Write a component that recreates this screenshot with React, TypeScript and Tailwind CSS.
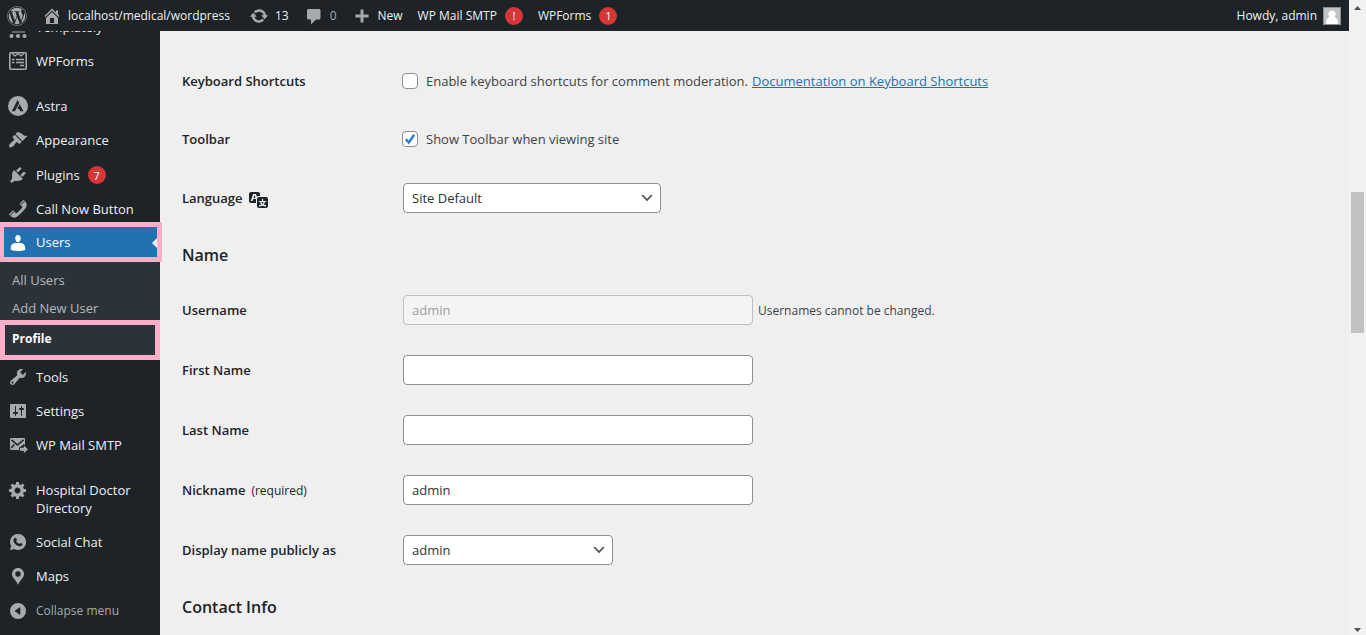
import type { ReactNode } from "react";
import { FaWordpress } from "react-icons/fa";

const icons = {
  home: "M16 8.5l1.53 1.53-1.06 1.06L10 4.6l-6.47 6.49-1.06-1.06L10 2.5l4 4v-2h2v4zm-6-2.46l6 5.99V18H4v-5.97zM12 17v-5H8v5h4z",
  update:
    "M10.2 3.28c3.53 0 6.43 2.61 6.92 6h2.08l-3.5 4-3.5-4h2.32c-.45-1.97-2.21-3.45-4.32-3.45-1.45 0-2.73.71-3.54 1.78L4.95 5.66C6.23 4.2 8.11 3.28 10.2 3.28zm-.4 13.44c-3.52 0-6.43-2.61-6.92-6H.8l3.5-4c1.17 1.33 2.33 2.67 3.5 4H5.48c.45 1.97 2.21 3.45 4.32 3.45 1.45 0 2.73-.71 3.54-1.78l1.71 1.95c-1.28 1.46-3.15 2.38-5.25 2.38z",
  comment:
    "M4.5 3h10.5c.8 0 1.500.7 1.500 1.500v7.500c0 .8-.7 1.500-1.500 1.500h-3l-5 5v-5H4.500C3.700 13.500 3 12.800 3 12V4.500C3 3.700 3.700 3 4.500 3z",
  plus: "M16.500 8.500v3H11.500v5h-3v-5h-5v-3h5v-5h3v5z",
  appearance:
    "M14.48 11.06L7.41 3.99l1.5-1.5c.5-.56 2.3-.47 3.51.32 1.21.8 1.43 1.28 2.91 2.1 1.18.64 2.45 1.26 4.45.85zm-.71.71L6.7 4.7 4.93 6.47c-.39.39-.39 1.02 0 1.41l1.06 1.06c.39.39.39 1.03 0 1.42-.6.6-1.43 1.11-2.21 1.69-.35.26-.7.53-1.01.84C1.43 14.23.4 16.08 1.4 17.07c.99 1 2.84-.03 4.18-1.36.31-.31.58-.66.85-1.02.57-.78 1.08-1.61 1.69-2.21.39-.39 1.02-.39 1.41 0l1.06 1.06c.39.39 1.02.39 1.41 0z",
  plugins:
    "M13.11 4.36L9.87 7.6 8 5.73l3.24-3.24c.35-.34 1.05-.2 1.56.32.52.51.66 1.21.31 1.55zm-8 1.77l.91-1.12 9.01 9.01-1.19.84c-.71.71-2.63 1.16-3.82 1.16H6.14L4.9 17.26c-.59.59-1.54.59-2.12 0-.59-.58-.59-1.53 0-2.12l1.24-1.24v-3.88c0-1.13.4-3.19 1.09-3.89zm7.26 3.97l3.24-3.24c.34-.35 1.04-.21 1.55.31.52.51.66 1.21.31 1.55l-3.24 3.25z",
  phone:
    "M12.06 6l-.21-.2c-.52-.54-.43-.79.08-1.3l2.72-2.75c.81-.82.96-1.21 1.73-.48l.21.2zm.53.45l4.4-4.4c.7.94 2.34 3.47 1.53 5.34-.73 1.67-1.09 1.75-2 3-1.85 2.11-4.18 4.37-6 6.07-1.26.91-1.31 1.33-3 2-1.8.71-4.4-.89-5.38-1.56l4.4-4.4 1.18 1.62c.34.46 1.2-.06 1.8-.66 1.04-1.05 3.18-3.18 4-4.07.59-.59 1.12-1.45.66-1.8zM1.57 16.5l-.21-.21c-.68-.74-.29-.9.52-1.7l2.74-2.72c.51-.49.75-.6 1.27-.11l.2.21z",
  users:
    "M10 9.250c-2.270 0-2.730-3.440-2.730-3.440C7 4.020 7.820 2 9.970 2c2.160 0 2.980 2.020 2.710 3.810 0 0-.41 3.440-2.680 3.440zM7.230 10h5.490c2.390 0 4.520 2.330 4.520 4.530v2.490s-3.650 1.130-7.240 1.130c-3.650 0-7.240-1.130-7.240-1.130v-2.490c0-2.250 1.940-4.530 4.470-4.530z",
  tools:
    "M16.68 9.77c-1.34 1.34-3.3 1.67-4.95.99l-5.41 6.52c-.99.99-2.59.99-3.58 0s-.99-2.59 0-3.57l6.52-5.42c-.68-1.65-.35-3.61.99-4.95 1.28-1.28 3.12-1.62 4.72-1.06l-2.89 2.89 2.82 2.82 2.86-2.87c.53 1.58.18 3.39-1.08 4.65zM3.81 16.21c.4.39 1.04.39 1.43 0 .4-.4.4-1.04 0-1.43-.39-.4-1.03-.4-1.43 0-.39.39-.39 1.03 0 1.43z",
  settings:
    "M18 16V4c0-.55-.45-1-1-1H3c-.55 0-1 .45-1 1v12c0 .55.45 1 1 1h14c.55 0 1-.45 1-1zM8 11h1c.55 0 1 .45 1 1s-.45 1-1 1H8v1.5c0 .28-.22.5-.5.5s-.5-.22-.5-.5V13H6c-.55 0-1-.45-1-1s.45-1 1-1h1V5.5c0-.28.22-.5.5-.5s.5.22.5.5V11zm5-2h-1c-.55 0-1-.45-1-1s.45-1 1-1h1V5.5c0-.28.22-.5.5-.5s.5.22.5.5V7h1c.55 0 1 .45 1 1s-.45 1-1 1h-1v5.5c0 .28-.22.5-.5.5s-.5-.22-.5-.5V9z",
  generic:
    "M18 12h-2.18c-.17.7-.44 1.35-.81 1.93l1.54 1.54-2.1 2.1-1.54-1.54c-.58.36-1.23.63-1.91.79V19H8v-2.18c-.68-.16-1.33-.43-1.91-.79l-1.54 1.54-2.12-2.12 1.54-1.54c-.36-.58-.63-1.23-.79-1.91H1V9.03h2.17c.16-.7.44-1.35.8-1.94L2.43 5.55l2.1-2.1 1.54 1.54c.58-.37 1.24-.64 1.93-.81V2h3v2.18c.68.16 1.33.43 1.91.79l1.54-1.54 2.12 2.12-1.54 1.54c.36.59.64 1.24.8 1.94H18V12zm-8.5 1.5c1.66 0 3-1.34 3-3s-1.34-3-3-3-3 1.34-3 3 1.34 3 3 3z",
  location:
    "M10 2C6.690 2 4 4.690 4 8c0 2.020 1.170 3.710 2.200 5.100 1.300 1.800 3 3.700 3.800 5.900.8-2.200 2.500-4.100 3.800-5.900C14.830 11.710 16 10.020 16 8c0-3.310-2.690-6-6-6zm0 3.300a2.700 2.700 0 1 1 0 5.400 2.700 2.700 0 0 1 0-5.400z",
  collapse: "M10 2a8 8 0 1 0 0 16 8 8 0 0 0 0-16zM12.300 6v8L6.500 10z",
  translation:
    "M11 7H9.49c-.63 0-1.25.3-1.59.7L7 5H4.13l-2.39 7h1.69l.74-2H7v4H2c-1.1 0-2-.9-2-2V5c0-1.1.9-2 2-2h7c1.1 0 2 .9 2 2v2zM6.51 9H4.49l1-2.93zM10 8h7c1.1 0 2 .9 2 2v7c0 1.1-.9 2-2 2h-7c-1.1 0-2-.9-2-2v-7c0-1.1.9-2 2-2zm7.25 5v-1.08h-3.17V9.75h-1.16v2.17H9.75V13h1.28c.11.85.56 1.85 1.28 2.62-.87.36-1.89.62-2.31.62-.01.02.22.97.2 1.46.84 0 2.21-.5 3.28-1.15 1.09.65 2.48 1.15 3.34 1.15-.02-.49.2-1.44.2-1.46-.43 0-1.49-.27-2.38-.63.7-.77 1.14-1.77 1.25-2.61h1.36zm-3.81 1.93c-.5-.46-.85-1.13-1.01-1.93h2.09c-.17.8-.51 1.47-1 1.93l-.04.03s-.03-.02-.04-.03z",
};

function Icon({ name }: { name: keyof typeof icons }) {
  return (
    <svg viewBox="0 0 20 20" className="size-5 shrink-0" fill="currentColor" fillRule="evenodd" aria-hidden="true">
      <path d={icons[name]} />
    </svg>
  );
}

function TemplatelyIcon() {
  return (
    <svg viewBox="0 0 20 20" className="size-5 shrink-0" fill="currentColor" aria-hidden="true">
      <path d="M3 2h14v3H3zM4 13.600h13v1H4z" />
      <circle cx="3.500" cy="18" r="2" />
      <circle cx="10" cy="18" r="2" />
      <circle cx="16.500" cy="18" r="2" />
    </svg>
  );
}

function WPFormsIcon() {
  return (
    <svg viewBox="0 0 20 20" className="size-5 shrink-0" fill="none" stroke="currentColor" aria-hidden="true">
      <rect x="1.800" y="1.800" width="16.400" height="16.400" rx="1" strokeWidth="1.600" />
      <path d="M4 2.500l3 2.500 3-2.500 3 2.500 3-2.500" strokeWidth="1.300" />
      <path d="M4 8.500h2.500M8 8.500h8M4 11.500h2.500M8 11.500h8M12 14.500h4" strokeWidth="1.500" />
    </svg>
  );
}

function AstraIcon() {
  return (
    <svg viewBox="0 0 20 20" className="size-5 shrink-0" aria-hidden="true">
      <circle cx="10" cy="10" r="10" fill="currentColor" />
      <path d="M9.600 3.800L3.900 15.200h3L11.200 7z" fill="#1d2327" />
      <path d="M11.700 8l-2.400 4.900h2l1 2.300h3.100z" fill="#1d2327" />
    </svg>
  );
}

function MailIcon() {
  return (
    <svg viewBox="0 0 20 20" className="size-5 shrink-0" aria-hidden="true">
      <path d="M3 3h13a1 1 0 0 1 1 1v5.500l-4 1.500v4H3a1 1 0 0 1-1-1V4a1 1 0 0 1 1-1z" fill="currentColor" />
      <path d="M3.500 4.800l6 5.200 6-5.200M3.300 13l3-3.500" fill="none" stroke="#1d2327" strokeWidth="1.600" />
      <path d="M11.500 12.200h4V9.500l5 4.800-5 4.700v-2.700h-4z" fill="currentColor" stroke="#1d2327" strokeWidth="1" />
    </svg>
  );
}

function ChatIcon() {
  return (
    <svg viewBox="0 0 20 20" className="size-5 shrink-0" aria-hidden="true">
      <path d="M10 2a8 8 0 1 1-3.800 15L2 18.200l1.200-4.100A8 8 0 0 1 10 2z" fill="currentColor" />
      <path
        d="M7.300 5.700c.4-.1.800 0 1 .5l.6 1.400c.2.500-.5 1.100-.8 1.500.8 1.500 1.800 2.300 3.200 2.900.4-.4.800-1.200 1.300-1l1.600.8c.500.3.1 1.400-.3 1.800-.7.700-1.700.9-2.700.6-2.900-.8-5.200-3-5.800-5.300-.3-1.300.6-2.900 1.900-3.200z"
        fill="#1d2327"
      />
    </svg>
  );
}

function Badge({ children }: { children: ReactNode }) {
  return (
    <span className="flex size-[18px] shrink-0 items-center justify-center rounded-full bg-[#d63638] text-[11px] leading-none text-white">
      {children}
    </span>
  );
}

function MenuItem({ icon, label, badge }: { icon: ReactNode; label: string; badge?: string }) {
  return (
    <li>
      <a
        href="#"
        className={
          badge
            ? "flex min-h-[35px] gap-2 px-2 pt-[9px] pb-2 leading-[18px] text-[#f0f0f1]"
            : "flex min-h-[34px] gap-2 px-2 py-2 leading-[18px] text-[#f0f0f1]"
        }
      >
        <span className="flex h-[18px] items-center text-[#a7aaad]">{icon}</span>
        <span>{label}</span>
        {badge && <Badge>{badge}</Badge>}
      </a>
    </li>
  );
}

function Sidebar() {
  return (
    <nav aria-label="Main menu" className="w-40 shrink-0 bg-[#1d2327] text-[13px]">
      <ul>
        <li className="flex h-[13px] flex-col justify-end overflow-hidden">
          <a href="#" className="flex h-[34px] shrink-0 gap-2 px-2 py-2 leading-[18px] text-[#f0f0f1]">
            <span className="text-[#a7aaad]"><TemplatelyIcon /></span>
            Templately
          </a>
        </li>
        <MenuItem icon={<WPFormsIcon />} label="WPForms" />
      </ul>
      <ul className="mt-[11px]">
        <MenuItem icon={<AstraIcon />} label="Astra" />
        <MenuItem icon={<Icon name="appearance" />} label="Appearance" />
        <MenuItem icon={<Icon name="plugins" />} label="Plugins" badge="7" />
        <MenuItem icon={<Icon name="phone" />} label="Call Now Button" />
        <li>
          <div className="relative">
            <a href="#" className="flex h-[34px] items-center gap-2 bg-[#2271b1] px-2 text-white">
              <Icon name="users" />
              Users
            </a>
            <span className="absolute top-[9px] right-0 border-y-8 border-r-8 border-y-transparent border-r-[#efefef]" />
            <span className="pointer-events-none absolute -top-1 -right-0.5 -bottom-0.5 left-0 border-[5px] border-l-4 border-[#ffaec9]" />
          </div>
          <ul className="bg-[#2c3338] pt-[7px] text-[#b4b9be]">
            <li><a href="#" className="flex h-7 items-center px-3">All Users</a></li>
            <li><a href="#" className="flex h-7 items-center px-3">Add New User</a></li>
            <li className="relative">
              <a href="#" aria-current="page" className="flex h-[37px] items-center px-3 pb-1.5 text-[12px] font-bold text-white">Profile</a>
              <span className="pointer-events-none absolute inset-x-0 -top-[3px] bottom-0 border-[5px] border-[#ffaec9]" />
            </li>
          </ul>
        </li>
        <MenuItem icon={<Icon name="tools" />} label="Tools" />
        <MenuItem icon={<Icon name="settings" />} label="Settings" />
        <MenuItem icon={<MailIcon />} label="WP Mail SMTP" />
      </ul>
      <ul className="mt-[11px]">
        <MenuItem icon={<Icon name="generic" />} label="Hospital Doctor Directory" />
        <MenuItem icon={<ChatIcon />} label="Social Chat" />
        <MenuItem icon={<Icon name="location" />} label="Maps" />
        <li>
          <button type="button" className="flex h-9 w-full items-center gap-2 px-2 text-[12px] text-[#a7aaad]">
            <Icon name="collapse" />
            Collapse menu
          </button>
        </li>
      </ul>
    </nav>
  );
}

function TopBar() {
  return (
    <header className="flex h-[31px] items-center bg-[#1d2327] pr-2 pl-[7px] text-[12px] text-[#f0f0f1]">
      <a href="#" aria-label="About WordPress" className="text-[#a7aaad]"><FaWordpress className="size-5" /></a>
      <a href="#" className="ml-[15px] flex items-center gap-1.5">
        <span className="text-[#a7aaad]"><Icon name="home" /></span>
        localhost/medical/wordpress
      </a>
      <a href="#" className="ml-[19px] flex items-center gap-1.5">
        <span className="text-[#a7aaad]"><Icon name="update" /></span>
        13
      </a>
      <a href="#" className="ml-[15px] flex items-center gap-1.5 text-[#a7aaad]">
        <Icon name="comment" />
        0
      </a>
      <a href="#" className="ml-[15px] flex items-center gap-1.5">
        <span className="text-[#a7aaad]"><Icon name="plus" /></span>
        New
      </a>
      <a href="#" className="ml-[15px] flex items-center gap-2">WP Mail SMTP <Badge>!</Badge></a>
      <a href="#" className="ml-[15px] flex items-center gap-2">WPForms <Badge>1</Badge></a>
      <a href="#" className="ml-auto flex items-center gap-1.5">
        Howdy, admin
        <svg viewBox="0 0 18 18" className="size-[18px]" aria-hidden="true">
          <path d="M0 0h18v18H0z" fill="#8c8f94" />
          <path d="M1 1h16v16H1z" fill="#c3c4c7" />
          <path d="M9 3.500a3.600 3.600 0 0 1 2.300 6.400c2.400.6 3.700 2.800 3.700 7.100H3c0-4.300 1.300-6.500 3.700-7.100A3.600 3.600 0 0 1 9 3.500z" fill="#fff" />
        </svg>
      </a>
    </header>
  );
}

function Row({ label, id, compact, children }: { label: ReactNode; id: string; compact?: boolean; children: ReactNode }) {
  return (
    <div className={compact ? "flex h-[58px] items-center" : "flex h-[60px] items-center"}>
      <label htmlFor={id} className="flex w-[221px] shrink-0 items-center gap-1.5 pt-0.5 font-semibold text-[#1d2327]">
        {label}
      </label>
      {children}
    </div>
  );
}

function Checkbox({ id, label, checked }: { id: string; label: string; checked?: boolean }) {
  return (
    <div className="-ml-px flex items-center gap-2">
      <span className="grid">
        <input
          id={id}
          type="checkbox"
          defaultChecked={checked}
          className="peer col-start-1 row-start-1 size-4 appearance-none rounded border border-[#8c8f94] bg-white"
        />
        <svg viewBox="0 0 16 16" className="pointer-events-none col-start-1 row-start-1 hidden size-4 peer-checked:block" fill="none" stroke="#3582c4" strokeWidth="2.600" aria-hidden="true">
          <path d="M3.800 8.200l3 3.200 5.400-7.600" />
        </svg>
      </span>
      <label htmlFor={id} className="pt-0.5">{label}</label>
    </div>
  );
}

function Select({ id, value, wide }: { id: string; value: string; wide?: boolean }) {
  return (
    <span className={wide ? "grid w-[258px]" : "grid w-[210px]"}>
      <select id={id} className="col-start-1 row-start-1 h-[30px] w-full appearance-none rounded-[4px] border border-[#8c8f94] bg-white px-2 pt-0.5 text-[#2c3338]">
        <option>{value}</option>
      </select>
      <svg viewBox="0 0 20 20" className="pointer-events-none col-start-1 row-start-1 mr-1 size-5 self-center justify-self-end" aria-hidden="true">
        <path d="M5 6l5 5 5-5 2 1-7 7-7-7 2-1z" fill="#555" transform="translate(2 2) scale(.8)" />
      </svg>
    </span>
  );
}

const fieldClass =
  "h-[30px] w-[350px] rounded-[4px] border border-[#8c8f94] bg-white px-2 text-[#2c3338] disabled:border-[#bebfc1] disabled:bg-[#f4f4f4] disabled:text-[#9a9da0]";

function Heading({ children }: { children: ReactNode }) {
  return <h2 className="flex h-[52px] items-center pt-0.5 text-[16px] font-semibold text-[#1d2327]">{children}</h2>;
}

function ProfileForm() {
  return (
    <main className="min-w-0 flex-1 px-[22px] pt-[21px]">
      <form>
        <Row id="shortcuts" label="Keyboard Shortcuts" compact>
          <Checkbox id="shortcuts" label="Enable keyboard shortcuts for comment moderation." />
          <a href="#" className="ml-1 pt-0.5 text-[#2271b1] underline">Documentation on Keyboard Shortcuts</a>
        </Row>
        <Row id="toolbar" label="Toolbar" compact>
          <Checkbox id="toolbar" label="Show Toolbar when viewing site" checked />
        </Row>
        <Row id="language" label={<>Language <Icon name="translation" /></>}>
          <Select id="language" value="Site Default" wide />
        </Row>
        <Heading>Name</Heading>
        <Row id="username" label="Username">
          <input id="username" className={fieldClass} defaultValue="admin" disabled />
          <span className="ml-[5px] pt-0.5 text-[12px]">Usernames cannot be changed.</span>
        </Row>
        <Row id="first" label="First Name"><input id="first" className={fieldClass} /></Row>
        <Row id="last" label="Last Name"><input id="last" className={fieldClass} /></Row>
        <Row id="nickname" label={<>Nickname <span className="text-[12px] font-medium">(required)</span></>}>
          <input id="nickname" className={fieldClass} defaultValue="admin" />
        </Row>
        <Row id="display" label="Display name publicly as"><Select id="display" value="admin" /></Row>
        <Heading>Contact Info</Heading>
      </form>
    </main>
  );
}

function ScrollBar() {
  return (
    <div className="flex w-[17px] shrink-0 flex-col items-center bg-[#f1f1f1]" aria-hidden="true">
      <svg viewBox="0 0 17 17" className="size-[17px]" fill="#505050"><path d="M5 10h7L8.500 6z" /></svg>
      <div className="flex w-[13px] flex-1 flex-col">
        <div className="flex-[175]" />
        <div className="flex-[141] bg-[#c1c1c1]" />
        <div className="flex-[285]" />
      </div>
      <svg viewBox="0 0 17 17" className="size-[17px]" fill="#505050"><path d="M5 10h7l-3.500 4z" /></svg>
    </div>
  );
}

export default function App() {
  return (
    <div className="flex min-h-screen bg-[#efefef] font-['Open_Sans','Noto_Sans',sans-serif] text-[13px] text-[#3c434a]">
      <div className="flex min-w-0 flex-1 flex-col">
        <TopBar />
        <div className="flex flex-1">
          <Sidebar />
          <ProfileForm />
        </div>
      </div>
      <ScrollBar />
    </div>
  );
}
